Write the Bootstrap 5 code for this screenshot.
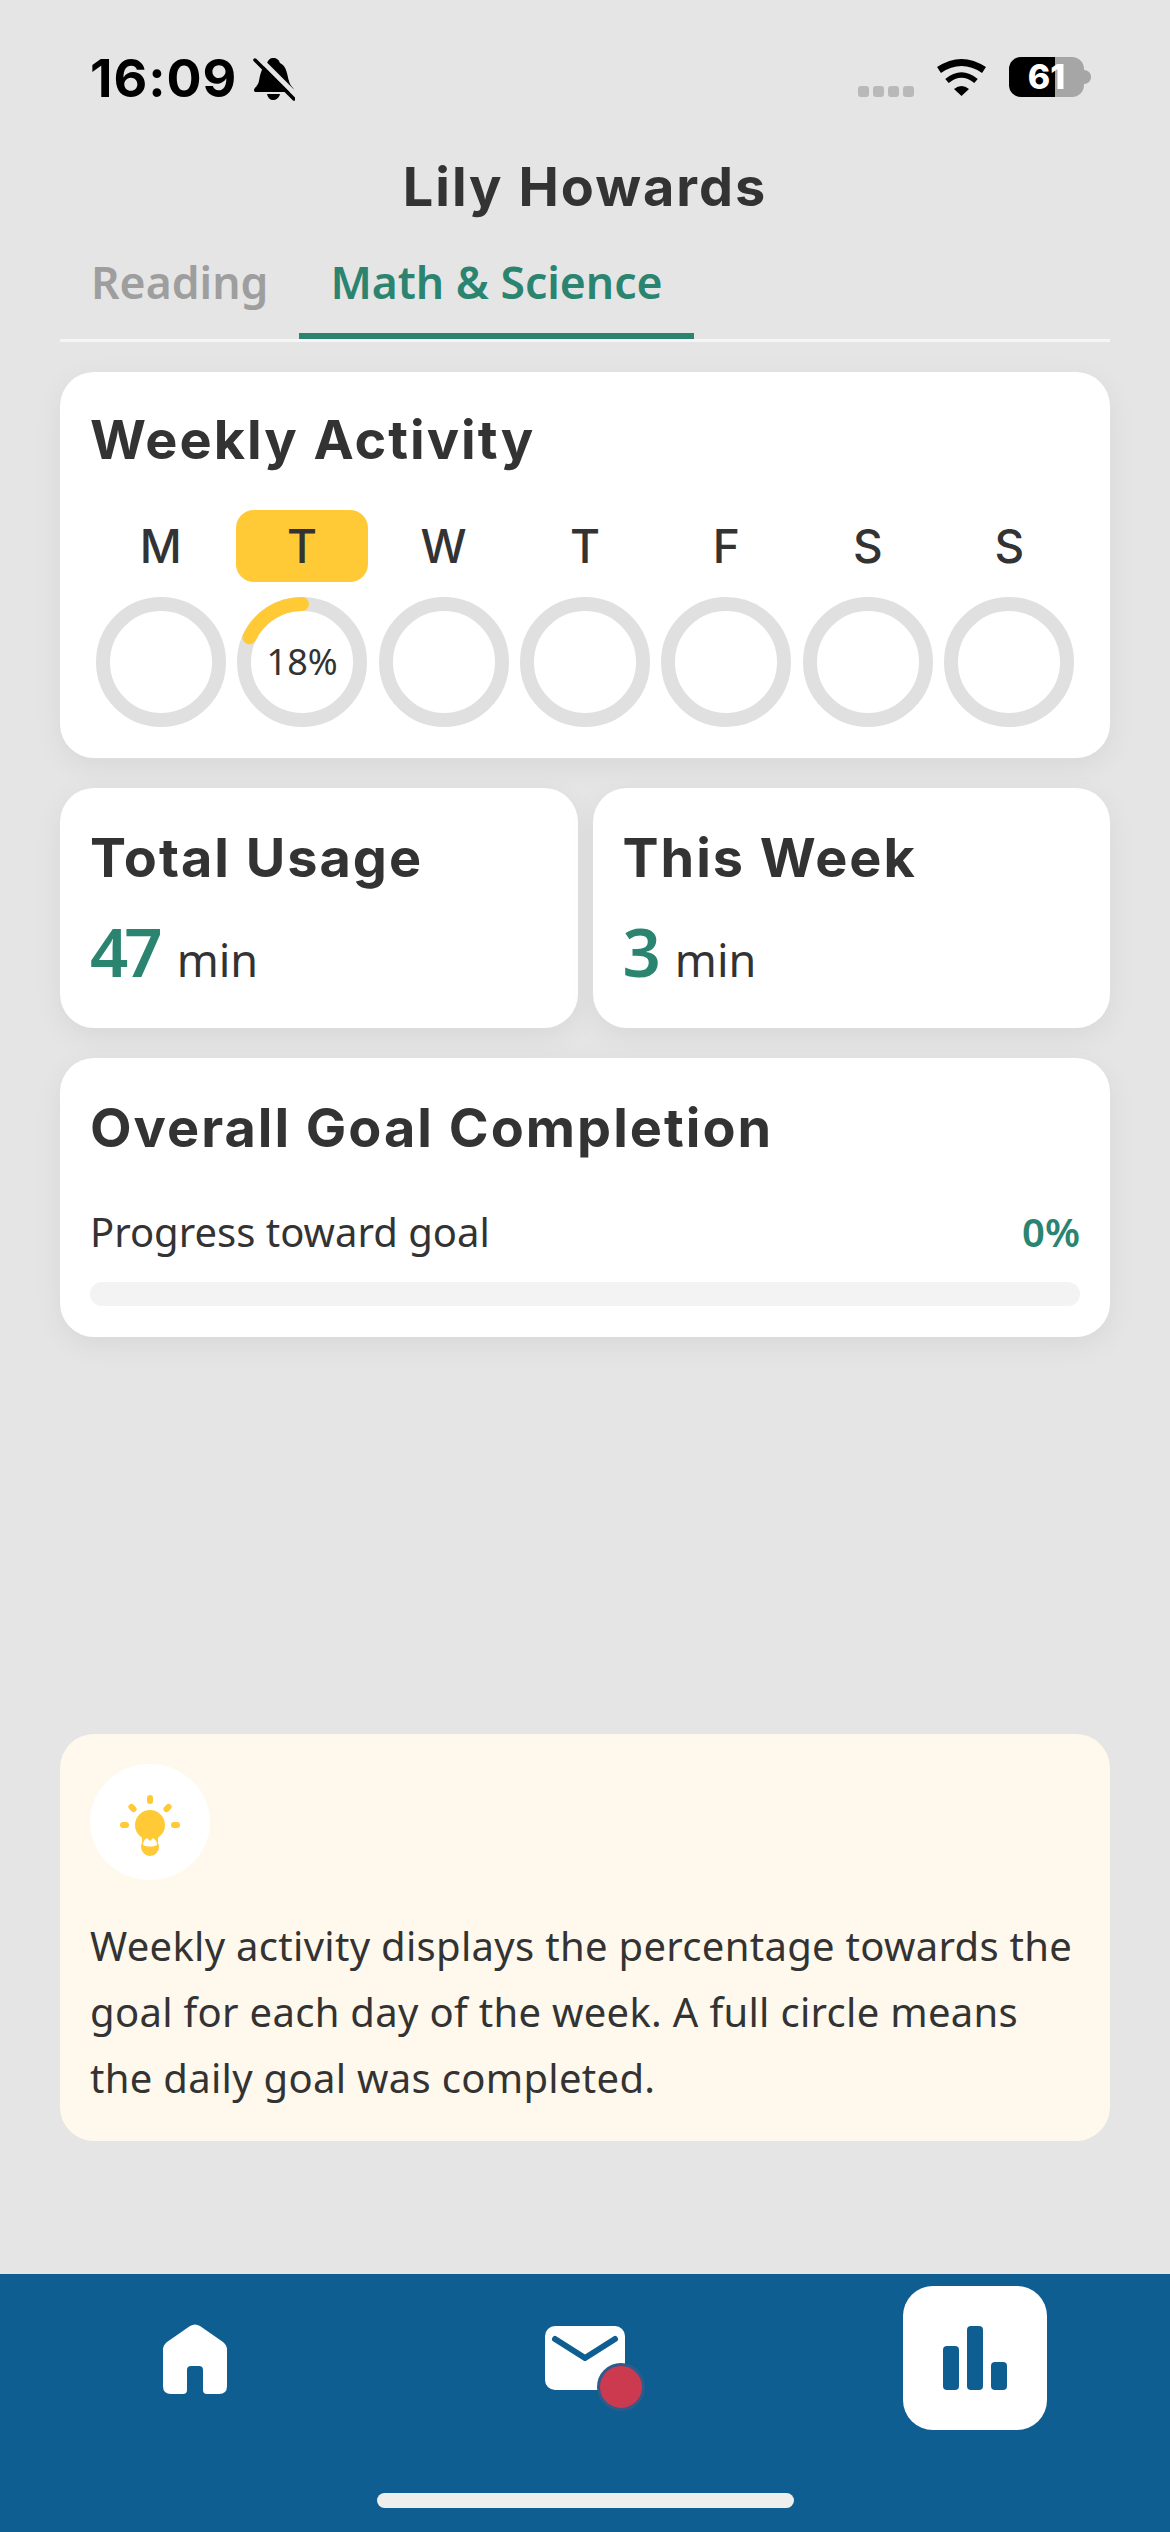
<!DOCTYPE html>
<html lang="en">

<head>
    <meta charset="UTF-8">
    <meta name="viewport" content="width=device-width, initial-scale=1.0">
    <title>Lily Howards</title>
    <link rel="stylesheet" href="https://cdn.jsdelivr.net/npm/bootstrap@5.3.0/dist/css/bootstrap.min.css">
    <style>
        body {
            background: #e5e5e5;
            color: #333;
            font-family: "Noto Sans", sans-serif;
        }

        .appShell {
            height: 2532px;
            overflow: hidden;
        }

        .statusRow {
            height: 110px;
            padding: 51px 79px 0 90px;
        }

        .clock {
            font: 700 52px/56px Inter, sans-serif;
            color: #000;
            letter-spacing: 1px;
        }

        .bellGlyph {
            margin-top: 6px;
        }

        .statusRight {
            margin-top: 6px;
        }

        .signalDots {
            gap: 4px;
            margin: 29px 22px 0 0;
        }

        .signalDots span {
            width: 11px;
            height: 11px;
            border-radius: 3px;
            background: #b9b9b9;
        }

        .wifiGlyph {
            margin: 1px 22px 0 0;
        }

        .batteryBox {
            width: 75px;
            height: 40px;
            border-radius: 12px;
            background: linear-gradient(to right, #000 61%, #a6a6a6 61%);
            color: #fff;
            font: 800 34px/40px Inter, sans-serif;
        }

        .batteryNub {
            margin-top: 13px;
        }

        .pageTitle {
            font: 700 54px/64px Inter, sans-serif;
            letter-spacing: 2px;
            margin: 0;
            height: 109px;
            padding-top: 45px;
        }

        .tabStrip {
            margin: 0 60px;
            border-bottom: 3px solid #f5f5f5;
            height: 123px;
        }

        .tabStrip .nav-link {
            font: 600 44.5px/58px "Noto Sans", sans-serif;
            color: #9e9e9e;
            padding: 0 31px;
            height: 86px;
        }

        .tabStrip .nav-link.active {
            color: #2a8470;
            border-bottom: 6px solid #2a8470;
        }

        .cardStack {
            padding: 30px 60px 0;
            gap: 30px;
        }

        .softCard {
            border: 0;
            border-radius: 34px;
            box-shadow: 0 8px 30px rgba(0, 0, 0, .06);
        }

        .cardTitle {
            font: 700 54px/64px Inter, sans-serif;
            letter-spacing: 2px;
            margin: 0;
        }

        .weekCard {
            height: 386px;
            padding: 36px 30px 0;
        }

        .dayGrid {
            display: grid;
            grid-template-columns: repeat(7, 1fr);
            margin-top: 38px;
        }

        .dayLabel {
            height: 72px;
            margin: 0 5px;
            border-radius: 18px;
            font: 500 46px/72px Inter, sans-serif;
        }

        .dayLabel.today {
            background: #ffca36;
        }

        .ringBox {
            width: 130px;
            height: 130px;
            margin-top: 15px;
        }

        .ringPct {
            font-size: 36px;
            line-height: 1;
        }

        .statPair {
            gap: 15px;
        }

        .statCard {
            height: 240px;
            width: 50%;
            padding: 38px 30px 0;
        }

        .statRow {
            margin-top: 21px;
        }

        .statValue {
            font-size: 67px;
            font-weight: 600;
            line-height: 80px;
            letter-spacing: -4px;
            color: #2a8470;
            margin-right: 18px;
        }

        .statUnit {
            font-size: 45px;
        }

        .goalCard {
            height: 279px;
            padding: 38px 30px 0;
        }

        .goalRow {
            font-size: 40px;
            line-height: 54px;
            margin-top: 45px;
        }

        .goalPct {
            color: #2a8470;
            font-weight: 600;
        }

        .goalBar {
            height: 24px;
            margin-top: 23px;
            border-radius: 12px;
            background: #f3f3f3;
        }

        .tipCard {
            margin: auto 60px 133px;
            height: 407px;
            padding: 30px;
            background: #fff9ed;
            box-shadow: none;
        }

        .tipBulb {
            width: 120px;
            height: 120px;
            background: #fff;
        }

        .tipBulb svg {
            margin-top: 8px;
        }

        .tipText {
            font-size: 40px;
            line-height: 66px;
            letter-spacing: .3px;
            margin: 33px 0 0;
        }

        .bottomNav {
            height: 258px;
            background: #0f5e91;
            padding-top: 12px;
        }

        .homeGlyph {
            margin-top: 38px;
        }

        .mailGlyph {
            width: 80px;
            margin-top: 40px;
        }

        .navChart {
            width: 144px;
            height: 144px;
            border-radius: 30px;
            background: #fff;
        }

        .mailBadge {
            width: 48px;
            height: 48px;
            right: -20px;
            bottom: -21px;
            background: #cc3a50;
            border: 3px solid #2f5a8a;
        }

        .homeBar {
            width: 417px;
            height: 15px;
            border-radius: 8px;
            background: #eee;
            margin: 63px auto 0;
        }
    </style>
</head>

<body>
    <div class="appShell d-flex flex-column">
        <!-- status bar -->
        <div class="statusRow d-flex justify-content-between align-items-start">
            <div class="d-flex gap-3">
                <span class="clock">16:09</span>
                <svg width="42" height="44" viewBox="0 0 42 44" class="bellGlyph">
                    <path d="M20 1C24 1 26 3 27 6C34 9 34 18 36 24C37 29 41 31 41 33C41 35 40 35 38 35H4C2 35 1 35 1 33C1 31 5 29 6 24C7 18 9 9 14 6C15 3 17 1 20 1Z" fill="#000" />
                    <path d="M14 37H27C26 41 23 43 20 43C17 43 15 41 14 37Z" fill="#000" />
                    <path d="M5 0L44 39" stroke="#e5e5e5" stroke-width="5" />
                    <path d="M2 3L41 42" stroke="#000" stroke-width="3.5" stroke-linecap="round" />
                </svg>
            </div>
            <div class="statusRight d-flex align-items-start">
                <div class="signalDots d-flex"><span></span><span></span><span></span><span></span></div>
                <svg width="51" height="38" viewBox="0 0 51 38" class="wifiGlyph" fill="none" stroke="#000">
                    <path d="M3 12Q25.5 -3 48 12" stroke-width="7" />
                    <path d="M11 23Q25.5 11 40 23" stroke-width="5.5" />
                    <path d="M25.5 38L18 31Q25.5 25 33 31Z" fill="#000" stroke="none" />
                </svg>
                <div class="batteryBox text-center">61</div>
                <svg width="7" height="14" viewBox="0 0 7 14" class="batteryNub"><path d="M0 0C4 0 7 3 7 7C7 11 4 14 0 14Z" fill="#a6a6a6" /></svg>
            </div>
        </div>

        <h1 class="pageTitle text-center">Lily Howards</h1>

        <ul class="tabStrip nav align-items-end">
            <li class="nav-item"><a class="nav-link" href="#">Reading</a></li>
            <li class="nav-item"><a class="nav-link active" href="#">Math &amp; Science</a></li>
        </ul>

        <div class="cardStack d-flex flex-column">
            <div class="softCard weekCard card">
                <h2 class="cardTitle">Weekly Activity</h2>
                <div class="dayGrid text-center">
                    <div class="dayLabel">M</div>
                    <div class="dayLabel today">T</div>
                    <div class="dayLabel">W</div>
                    <div class="dayLabel">T</div>
                    <div class="dayLabel">F</div>
                    <div class="dayLabel">S</div>
                    <div class="dayLabel">S</div>

                    <div class="ringBox mx-auto"><svg width="130" height="130"><circle cx="65" cy="65" r="58" fill="none" stroke="#e0e0e0" stroke-width="14" /></svg></div>
                    <div class="ringBox mx-auto position-relative">
                        <svg width="130" height="130">
                            <circle cx="65" cy="65" r="58" fill="none" stroke="#e0e0e0" stroke-width="14" />
                            <path d="M65 7A58 58 0 0 0 12.5 40.3" fill="none" stroke="#ffca36" stroke-width="14" stroke-linecap="round" />
                        </svg>
                        <span class="ringPct position-absolute top-50 start-50 translate-middle">18%</span>
                    </div>
                    <div class="ringBox mx-auto"><svg width="130" height="130"><circle cx="65" cy="65" r="58" fill="none" stroke="#e0e0e0" stroke-width="14" /></svg></div>
                    <div class="ringBox mx-auto"><svg width="130" height="130"><circle cx="65" cy="65" r="58" fill="none" stroke="#e0e0e0" stroke-width="14" /></svg></div>
                    <div class="ringBox mx-auto"><svg width="130" height="130"><circle cx="65" cy="65" r="58" fill="none" stroke="#e0e0e0" stroke-width="14" /></svg></div>
                    <div class="ringBox mx-auto"><svg width="130" height="130"><circle cx="65" cy="65" r="58" fill="none" stroke="#e0e0e0" stroke-width="14" /></svg></div>
                    <div class="ringBox mx-auto"><svg width="130" height="130"><circle cx="65" cy="65" r="58" fill="none" stroke="#e0e0e0" stroke-width="14" /></svg></div>
                </div>
            </div>

            <div class="statPair d-flex">
                <div class="softCard statCard card">
                    <h2 class="cardTitle">Total Usage</h2>
                    <div class="statRow d-flex align-items-baseline"><span class="statValue">47</span><span class="statUnit">min</span></div>
                </div>
                <div class="softCard statCard card">
                    <h2 class="cardTitle">This Week</h2>
                    <div class="statRow d-flex align-items-baseline"><span class="statValue">3</span><span class="statUnit">min</span></div>
                </div>
            </div>

            <div class="softCard goalCard card">
                <h2 class="cardTitle">Overall Goal Completion</h2>
                <div class="goalRow d-flex justify-content-between"><span>Progress toward goal</span><span class="goalPct">0%</span></div>
                <div class="goalBar"></div>
            </div>
        </div>

        <div class="softCard tipCard card">
            <div class="tipBulb rounded-circle d-flex align-items-center justify-content-center">
                <svg width="60" height="62" viewBox="0 0 60 62" fill="#ffca36">
                    <rect x="27" y="0" width="6" height="9" rx="3" />
                    <rect x="9.5" y="8.5" width="6" height="9" rx="3" transform="rotate(-45 12.5 13)" />
                    <rect x="44.5" y="8.5" width="6" height="9" rx="3" transform="rotate(45 47.5 13)" />
                    <rect x="0" y="27" width="9" height="6" rx="3" />
                    <rect x="51" y="27" width="9" height="6" rx="3" />
                    <circle cx="30" cy="30" r="15" />
                    <path d="M22 38H38V52H22Z" />
                    <circle cx="30" cy="52" r="9" />
                    <path d="M23 50C23 46 25 44 27 43L30 46L33 43C35 44 37 46 37 50C33 52 27 52 23 50Z" fill="#fff" />
                </svg>
            </div>
            <p class="tipText">Weekly activity displays the percentage towards the goal for each day of the week. A full circle means the daily goal was completed.</p>
        </div>

        <!-- bottom tab bar -->
        <div class="bottomNav">
            <div class="row g-0 text-center">
                <div class="col-4 d-flex justify-content-center align-items-start">
                    <svg width="64" height="70" viewBox="0 0 64 70" class="homeGlyph">
                        <path d="M27 2Q32 -1 37 2L60 18Q64 21 64 26V62Q64 70 56 70H44Q40 70 40 66V46Q40 42 36 42H28Q24 42 24 46V66Q24 70 20 70H8Q0 70 0 62V26Q0 21 4 18Z" fill="#fff" />
                    </svg>
                </div>
                <div class="col-4 d-flex justify-content-center align-items-start">
                    <div class="mailGlyph position-relative">
                        <svg width="80" height="64" viewBox="0 0 80 64" class="d-block">
                            <rect width="80" height="64" rx="10" fill="#fff" />
                            <path d="M10 13L40 32L70 13" fill="none" stroke="#0f5e91" stroke-width="6" stroke-linecap="round" stroke-linejoin="round" />
                        </svg>
                        <span class="mailBadge position-absolute rounded-circle"></span>
                    </div>
                </div>
                <div class="col-4 d-flex justify-content-center align-items-start">
                    <div class="navChart d-flex align-items-center justify-content-center">
                        <svg width="64" height="64" viewBox="0 0 64 64" fill="#0f5e91">
                            <rect x="0" y="20" width="16" height="44" rx="4" />
                            <rect x="24" y="0" width="16" height="64" rx="4" />
                            <rect x="48" y="36" width="16" height="28" rx="4" />
                        </svg>
                    </div>
                </div>
            </div>
            <div class="homeBar"></div>
        </div>
    </div>

    <script src="https://cdn.jsdelivr.net/npm/bootstrap@5.3.0/dist/js/bootstrap.bundle.min.js"></script>
</body>

</html>
